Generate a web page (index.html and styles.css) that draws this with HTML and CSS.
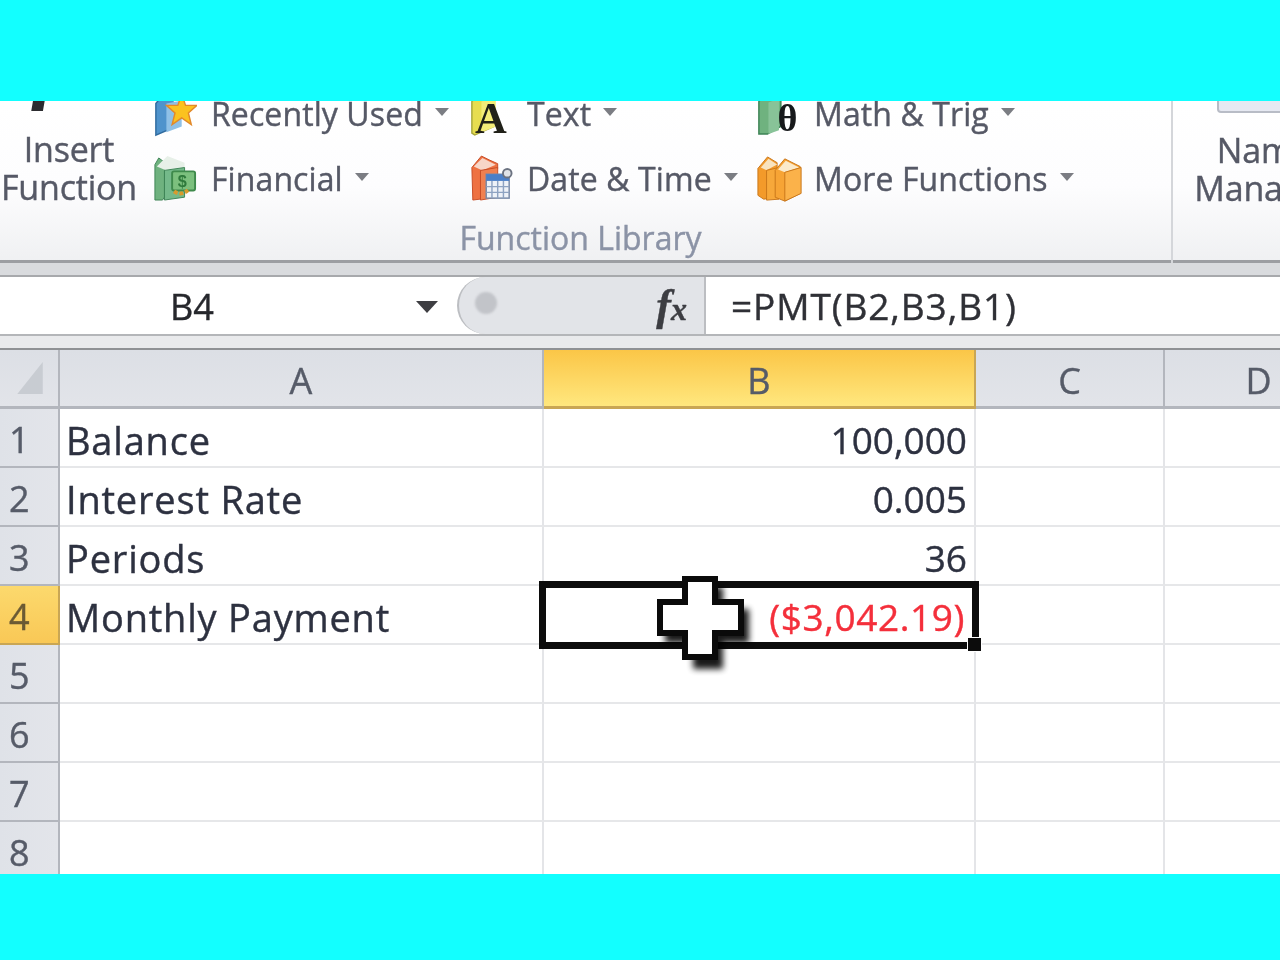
FILE: index.html
```html
<!DOCTYPE html>
<html lang="en">
<head>
<meta charset="utf-8">
<title>Monthly Payment</title>
<link rel="stylesheet" href="styles.css">
</head>
<body>
<div class="band band-top"></div>
<main class="app">
  <section class="ribbon">
    <div class="group library">
      <div class="group-main">
        <div class="big-command">
          <svg class="fx-big" viewBox="0 0 60 30"><text x="-9" y="-9" class="fx-big-text">f</text></svg>
          <div class="big-label">Insert<br>Function</div>
        </div>
        <div class="commands">
          <div class="command c1">
            <svg class="icon" viewBox="0 0 46 50"><path d="M3 14 12 3 24 6V38L3 47Z" fill="#4f93cc" stroke="#2f6b9f" stroke-width="1.5"/><path d="M12 3 30 8 30 12 24 14Z" fill="#f3f6fa"/><path d="M14 14 30 11V38L14 44Z" fill="#8fc0e6"/><path d="M30 4 34 16 46 16 37 24 40 36 30 29 20 36 23 24 14 16 26 16Z" fill="#fbc21f" stroke="#e2892a" stroke-width="1.5"/></svg>
            <span class="cmd-text">Recently Used</span><i class="caret"></i>
          </div>
          <div class="command c2">
            <svg class="icon" viewBox="0 0 46 50"><path d="M14 9 6 3 2 10 2 47 10 47 12 44V16Z" fill="#6fb27f" stroke="#3d8355"/><path d="M4 12 15 1 33 8 33 14 14 16Z" fill="#e7f0e8"/><path d="M12 16 33 13V44L12 47Z" fill="#74b98a" stroke="#3d8355"/><rect x="20" y="17" width="24" height="20" rx="2" fill="#7cc07e" stroke="#3f8a4c" stroke-width="2"/><text x="26" y="33" class="mini-money">$</text><path d="M22 38c6 4 12 2 16-3" fill="none" stroke="#d99a2c" stroke-width="4" stroke-dasharray="4 2"/></svg>
            <span class="cmd-text">Financial</span><i class="caret"></i>
          </div>
          <div class="command c1">
            <svg class="icon" viewBox="0 0 46 50"><path d="M3 12 11 3 26 8V38L6 47 3 45Z" fill="#e7dd4f" stroke="#a7a63a" stroke-width="1.5"/><path d="M13 12 28 8V38L13 44Z" fill="#f3ec78"/><text x="23" y="45" class="mini-a">A</text></svg>
            <span class="cmd-text">Text</span><i class="caret"></i>
          </div>
          <div class="command c2">
            <svg class="icon" viewBox="0 0 46 50"><path d="M3 13 13 1 21 5 30 9V14L14 16 12 46 4 47Z" fill="#ee7142" stroke="#c54a25"/><path d="M5 12 14 3 28 10 14 16Z" fill="#f7d6c8"/><path d="M12 16 30 13V44L12 47Z" fill="#f08050" stroke="#c54a25"/><rect x="18" y="20" width="24" height="25" fill="#eef2f8" stroke="#7688a6" stroke-width="1.5"/><rect x="18" y="20" width="24" height="7" fill="#4a7fc8"/><path d="M18 33H42M18 39H42M24 27V45M30 27V45M36 27V45" stroke="#8ea3c2" stroke-width="1.5"/><circle cx="40" cy="19" r="4.5" fill="#dfe3e8" stroke="#6b7280" stroke-width="2"/></svg>
            <span class="cmd-text">Date &amp; Time</span><i class="caret"></i>
          </div>
          <div class="command c1">
            <svg class="icon" viewBox="0 0 46 50"><path d="M3 12 11 3 26 7V38L12 46 3 46Z" fill="#6fb27f" stroke="#3d8355" stroke-width="1.5"/><path d="M13 13 24 9V42L13 46Z" fill="#88c398"/><text x="33" y="43" class="mini-theta">θ</text></svg>
            <span class="cmd-text">Math &amp; Trig</span><i class="caret"></i>
          </div>
          <div class="command c2">
            <svg class="icon icon-wide" viewBox="0 0 50 50"><path d="M2 14 12 2 22 8V44L8 46 2 42Z" fill="#f39a2a" stroke="#c9761a"/><path d="M5 13 13 4 22 10 11 16Z" fill="#f8e3bf"/><path d="M11 16 24 13V46L11 47Z" fill="#f7a83a" stroke="#c9761a"/><path d="M20 16 30 4 46 12V40L30 48 20 44Z" fill="#f7a435" stroke="#c9761a"/><path d="M23 15 31 6 45 13 30 18Z" fill="#fbeacb"/><path d="M30 18 47 13V40L30 48Z" fill="#fbb24a" stroke="#c9761a"/></svg>
            <span class="cmd-text">More Functions</span><i class="caret"></i>
          </div>
        </div>
      </div>
      <div class="group-caption">Function Library</div>
    </div>
    <div class="group names">
      <div class="name-icon"></div>
      <div class="big-label name-label">Name<br>Manager</div>
    </div>
  </section>

  <section class="formula-bar">
    <div class="formula-row">
      <div class="name-box"><span class="name-value">B4</span><i class="caret caret-dark"></i></div>
      <div class="fx-box"><span class="fx-dot"></span><span class="fx-label"><em>f</em><em class="fx-x">x</em></span></div>
      <div class="formula">=PMT(B2,B3,B1)</div>
    </div>
    <div class="formula-gap"></div>
  </section>

  <section class="sheet">
    <div class="corner"><svg class="corner-mark" viewBox="0 0 26 32"><path d="M25 1V31H1Z" fill="#c8ccd2"/></svg></div>
    <div class="col-head">A</div>
    <div class="col-head active">B</div>
    <div class="col-head">C</div>
    <div class="col-head last">D</div>

    <div class="row-head">1</div><div class="cell">Balance</div><div class="cell num">100,000</div><div class="cell"></div><div class="cell last"></div>
    <div class="row-head">2</div><div class="cell">Interest Rate</div><div class="cell num">0.005</div><div class="cell"></div><div class="cell last"></div>
    <div class="row-head">3</div><div class="cell">Periods</div><div class="cell num">36</div><div class="cell"></div><div class="cell last"></div>
    <div class="row-head active">4</div><div class="cell">Monthly Payment</div>
    <div class="cell num negative selected">($3,042.19)
      <span class="selection"></span><span class="handle"></span>
      <svg class="cursor" viewBox="0 0 105 100">
        <path class="cursor-shadow" d="M34 12H66V34H92V68H66V94H36V68H8V34H34Z"/>
        <path class="cursor-cross" d="M28 4H58V27H84V58H58V82H28V58H3V27H28Z"/>
      </svg>
    </div>
    <div class="cell"></div><div class="cell last"></div>
    <div class="row-head">5</div><div class="cell"></div><div class="cell"></div><div class="cell"></div><div class="cell last"></div>
    <div class="row-head">6</div><div class="cell"></div><div class="cell"></div><div class="cell"></div><div class="cell last"></div>
    <div class="row-head">7</div><div class="cell"></div><div class="cell"></div><div class="cell"></div><div class="cell last"></div>
    <div class="row-head">8</div><div class="cell"></div><div class="cell"></div><div class="cell"></div><div class="cell last"></div>
  </section>
</main>
<div class="band band-bottom"></div>
</body>
</html>
```
FILE: styles.css
```css
* { box-sizing: border-box; }
html, body { margin: 0; height: 100%; }
body {
  width: 1280px; height: 960px; overflow: hidden;
  display: flex; flex-direction: column;
  background: #12ffff;
  font-family: "Open Sans", "Liberation Sans", sans-serif;
  font-weight: 500;
}
.band { background: #12ffff; flex: none; }
.band-top { height: 101px; }
.band-bottom { height: 86px; }
.app { height: 773px; flex: none; overflow: hidden; display: flex; flex-direction: column; background: #fff; -webkit-text-stroke: .4px; }
.app > * { filter: blur(.55px); }

/* ribbon */
.ribbon {
  height: 174px; flex: none; display: flex; overflow: hidden;
  background: linear-gradient(#fff 0, #fdfdfe 85px, #eff0f2 162px);
  border-bottom: 12px solid #d9dbde;
  box-shadow: inset 0 -3px 0 #9c9ea2;
  color: #565966;
}
.group { height: 162px; flex: none; }
.library { width: 1173px; border-right: 2px solid #d4d6da; display: flex; flex-direction: column; }
.group-main { display: flex; height: 122px; }
.big-command { width: 154px; flex: none; display: flex; flex-direction: column; align-items: center; padding-right: 16px; }
.fx-big { width: 60px; height: 29px; flex: none; overflow: visible; }
.fx-big-text { font: italic 700 92px "Liberation Serif", serif; fill: #2c2c30; }
.big-label { font-size: 34px; line-height: 38px; text-align: center; letter-spacing: -.2px; white-space: nowrap; }
.commands {
  display: grid; grid-template-columns: 316px 287px auto; grid-auto-flow: column;
  grid-template-rows: 65px 65px; margin-top: -20px;
}
.command { display: flex; align-items: center; white-space: nowrap; }
.icon { width: 44px; height: 48px; flex: none; margin-right: 14px; margin-left: -1px; }
.icon-wide { width: 48px; margin-right: 10px; }
.cmd-text { font-size: 32px; letter-spacing: .1px; line-height: 40px; }
.caret { width: 0; height: 0; margin-left: 12px; margin-top: -3px; border: 7px solid transparent; border-top: 8px solid #7b7d83; border-bottom: 0; display: block; flex: none; }
.mini-money { font: 700 17px "Liberation Sans", sans-serif; fill: #2f7a3c; }
.mini-a { font: 700 46px "Liberation Serif", serif; fill: #202018; text-anchor: middle; }
.mini-theta { font: 700 40px "Liberation Serif", serif; fill: #17191b; text-anchor: middle; }
.group-caption { text-align: center; font-size: 32px; line-height: 40px; color: #8b93a6; padding-right: 10px; height: 40px; margin-top: -5px; }
.names { width: 150px; padding-left: 16px; }
.name-icon { width: 80px; height: 12px; margin-left: 28px; border: 2px solid #b8bcc6; border-top: 0; border-radius: 0 0 4px 4px; background: #e6e9f2; }
.name-label { width: 150px; margin-top: 18px; }

/* formula bar */
.formula-bar { height: 75px; flex: none; display: flex; flex-direction: column; background: #fff; }
.formula-row { height: 61px; flex: none; display: flex; border-top: 2px solid #a7a9ac; border-bottom: 2px solid #b4b6b9; }
.formula-gap { flex: 1; background: #e9eaec; border-bottom: 2px solid #8f9194; }
.name-box { width: 457px; display: flex; align-items: center; flex: none; }
.name-value { width: 384px; text-align: center; font-size: 36px; color: #26272c; padding-top: 2px; }
.caret-dark { margin-left: 32px; margin-top: 2px; border-width: 11px; border-top: 12px solid #3e3e42; border-bottom: 0; }
.fx-box { width: 249px; flex: none; display: flex; align-items: center; justify-content: space-between; padding: 0 17px 0 16px; background: #e2e4e8; border-radius: 30px 0 0 30px; border: 2px solid #bcbec2; border-width: 0 2px 0 2px; }
.fx-dot { width: 22px; height: 22px; border-radius: 50%; background: #c2c4c9; margin-top: -6px; filter: blur(1px); }
.fx-label { font: italic 700 44px "Liberation Serif", serif; color: #3c3d42; }
.fx-label em { font-style: italic; }
.fx-x { font-size: 32px; }
.formula { padding-left: 25px; display: flex; align-items: center; font-size: 37px; color: #2f3036; letter-spacing: .9px; white-space: nowrap; }

/* sheet */
.sheet {
  flex: 1; min-height: 0; overflow: hidden; display: grid;
  grid-template-columns: 60px 484px 432px 189px 115px;
  grid-template-rows: 59px repeat(8, 59px);
  font-size: 38px; color: #2d3140;
}
.corner, .col-head, .row-head { background: linear-gradient(#dcdfe5, #e2e4e9); color: #565b68; display: flex; align-items: center; justify-content: center; border-right: 2px solid #b3b6bd; border-bottom: 3px solid #b3b6bd; }
.corner { justify-content: flex-end; padding-right: 13px; }
.corner-mark { width: 30px; height: 34px; }
.col-head { font-size: 36px; padding-top: 4px; }
.col-head.last { border-right: 0; padding-left: 72px; }
.col-head.active { background: linear-gradient(#fbc647, #ffe77e); border-color: #c9a654; }
.row-head { background: linear-gradient(90deg, #dfe2e8, #e3e5ea); justify-content: flex-start; padding: 5px 0 0 9px; line-height: 1; font-size: 36px; border-bottom-width: 2px; }
.row-head.active { background: linear-gradient(#fcd96d, #f9c856); color: #6b5a34; border-color: #c9a654; }
.cell { border-right: 2px solid #e4e5e8; border-bottom: 2px solid #e6e7e9; display: flex; align-items: center; padding: 4px 7px 0 6px; white-space: nowrap; letter-spacing: .8px; }
.cell.last { border-right: 0; }
.num { justify-content: flex-end; letter-spacing: 0; font-size: 37px; }
.negative { color: #f42f3b; letter-spacing: .6px; padding-right: 9px; }
.selected { position: relative; }
.selection { position: absolute; left: -5px; top: -5px; width: 440px; height: 68px; border: 7px solid #0c0c0c; pointer-events: none; }
.handle { position: absolute; right: -8px; top: 51px; width: 15px; height: 15px; background: #0c0c0c; border: 1px solid #fff; }
.cursor { position: absolute; left: 113px; top: -11px; width: 105px; height: 100px; overflow: visible; }
.cursor-shadow { fill: #000; opacity: .9; filter: blur(3px); }
.cursor-cross { fill: #fff; stroke: #0a0a0a; stroke-width: 6; stroke-linejoin: miter; }
```
